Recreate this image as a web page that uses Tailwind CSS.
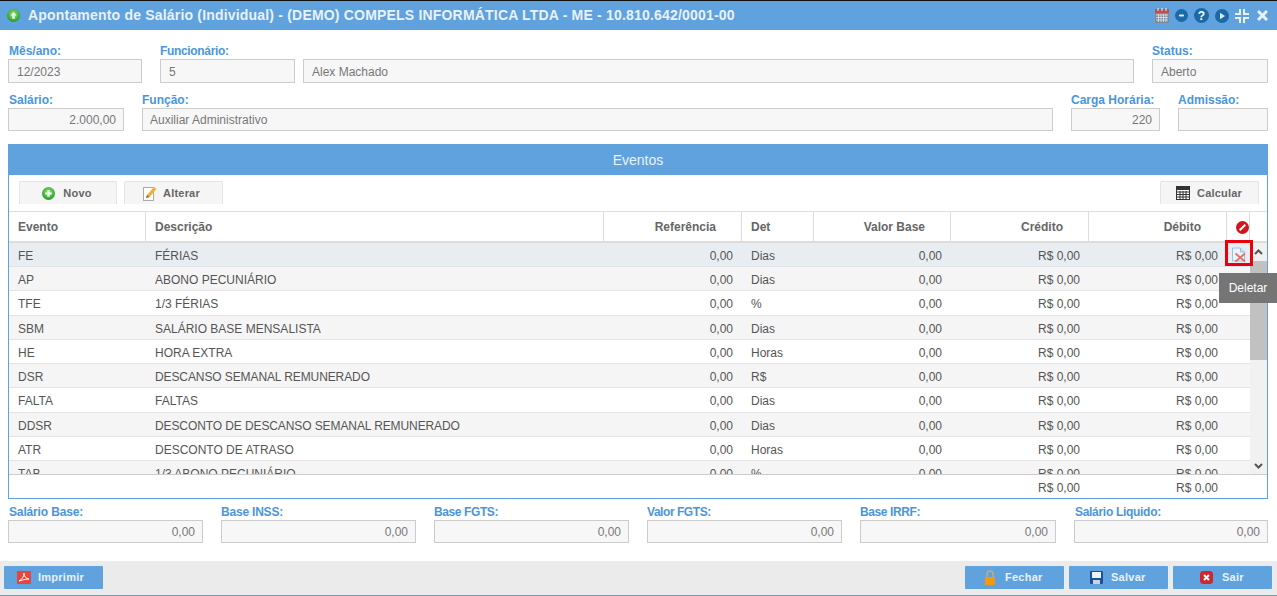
<!DOCTYPE html>
<html lang="pt"><head><meta charset="utf-8"><script src="https://cdn.jsdelivr.net/npm/@tailwindcss/browser@4"></script><title>Apontamento</title></head>
<body class="w-[1277px] h-[596px] overflow-hidden bg-white font-['Liberation_Sans',Arial,sans-serif] text-[12px] text-[#555]">
<div class="relative flex flex-col h-[596px] border-t border-[#111]">
<header class="flex items-center h-[29px] shrink-0 bg-[#5fa2dd] pl-[7px] pr-[9px]">
 <svg class="w-[13px] h-[13px] mr-[8px]" viewBox="0 0 14 14"><defs><radialGradient id="g1" cx=".5" cy=".4" r=".6"><stop offset="0" stop-color="#9be86a"/><stop offset="1" stop-color="#1c9a2c"/></radialGradient></defs><circle cx="7" cy="7" r="7" fill="url(#g1)"/><path d="M7 3.300 10.200 7H8.300v3.400H5.700V7H3.800z" fill="#f2fff0"/></svg>
 <span class="font-bold text-[14px] tracking-[0.19px] text-[#e9f1f9] whitespace-nowrap">Apontamento de Salário (Individual) - (DEMO) COMPELS INFORMÁTICA LTDA - ME - 10.810.642/0001-00</span>
 <div class="ml-auto flex items-center gap-[6px]">
  <svg class="w-[14px] h-[15px]" viewBox="0 0 14 15"><rect x="0" y="1" width="14" height="14" fill="#7f8b9b"/><rect x="0" y="1" width="14" height="4" fill="#c0504d"/><path d="M3 0v3M7 0v3M11 0v3" stroke="#eee"/><path d="M1 7h12M1 9.500h12M1 12h12M3.500 6v8M6 6v8M8.500 6v8M11 6v8" stroke="#e8edf2" stroke-width=".7"/></svg>
  <svg class="w-[13px] h-[13px]" viewBox="0 0 14 14"><circle cx="7" cy="7" r="7" fill="#1c69a8"/><rect x="4.200" y="5.800" width="5.600" height="2.400" rx="1.200" fill="#dfeaf5"/></svg>
  <svg class="w-[15px] h-[15px]" viewBox="0 0 15 15"><circle cx="7.500" cy="7.500" r="7.500" fill="#1c69a8"/><text x="7.500" y="12" text-anchor="middle" font-size="12" font-weight="700" font-family="Liberation Sans" fill="#fff">?</text></svg>
  <svg class="w-[14px] h-[14px]" viewBox="0 0 14 14"><circle cx="7" cy="7" r="7" fill="#1c69a8"/><path d="M5 3.800 10 7 5 10.200z" fill="#dfeaf5"/></svg>
  <svg class="w-[14px] h-[14px]" viewBox="0 0 14 14" fill="none" stroke="#e9f1f9" stroke-width="2"><path d="M5 0v5H0M9 0v5h5M5 14V9H0M9 14V9h5"/></svg>
  <svg class="w-[11px] h-[11px] ml-[2px]" viewBox="0 0 11 11" stroke="#e9f1f9" stroke-width="3"><path d="M1 1l9 9M10 1l-9 9"/></svg>
 </div>
</header>

<section class="pl-[8px] pr-[9px] pt-[14px] shrink-0 text-[#777]">
 <div class="flex gap-[18px] h-[40px]">
  <div class="w-[134px] flex flex-col"><span class="h-[15px] leading-[14px] font-bold text-[#4a96dc] pl-px">Mês/ano:</span><div class="h-[24px] border border-[#ccc] bg-[#f7f7f7] px-[8px] leading-[24px]">12/2023</div></div>
  <div class="flex-1 flex flex-col"><span class="h-[15px] leading-[14px] font-bold tracking-[-0.33px] text-[#4a96dc]">Funcionário:</span><div class="flex gap-[8px]"><div class="w-[135px] h-[24px] border border-[#ccc] bg-[#f7f7f7] px-[8px] leading-[24px]">5</div><div class="flex-1 h-[24px] border border-[#ccc] bg-[#f7f7f7] px-[8px] leading-[24px]">Alex Machado</div></div></div>
  <div class="w-[116px] flex flex-col"><span class="h-[15px] leading-[14px] font-bold text-[#4a96dc]">Status:</span><div class="h-[24px] border border-[#ccc] bg-[#f7f7f7] px-[8px] leading-[24px]">Aberto</div></div>
 </div>
 <div class="flex gap-[18px] h-[40px] mt-[9px]">
  <div class="w-[116px] flex flex-col"><span class="h-[15px] leading-[14px] font-bold text-[#4a96dc] pl-px">Salário:</span><div class="h-[23px] border border-[#ccc] bg-[#f7f7f7] px-[8px] leading-[22px] text-right pr-[7px]">2.000,00</div></div>
  <div class="flex-1 flex flex-col"><span class="h-[15px] leading-[14px] font-bold text-[#4a96dc]">Função:</span><div class="h-[23px] border border-[#ccc] bg-[#f7f7f7] px-[7px] leading-[22px]">Auxiliar Administrativo</div></div>
  <div class="w-[89px] flex flex-col"><span class="h-[15px] leading-[14px] font-bold text-[#4a96dc] whitespace-nowrap">Carga Horária:</span><div class="h-[23px] border border-[#ccc] bg-[#f7f7f7] leading-[22px] text-right pr-[7px]">220</div></div>
  <div class="w-[90px] flex flex-col"><span class="h-[15px] leading-[14px] font-bold text-[#4a96dc]">Admissão:</span><div class="h-[23px] border border-[#ccc] bg-[#f7f7f7]"></div></div>
 </div>
</section>

<section class="ml-[8px] mr-[9px] mt-[11px] h-[355px] shrink-0 border border-[#5fa2dd] flex flex-col">
 <div class="h-[30px] shrink-0 bg-[#5fa2dd] text-center text-[14px] leading-[30px] text-[#e9f1f9]">Eventos</div>
 <div class="h-[36px] shrink-0 flex items-start gap-[7px] pl-[10px] pr-[8px] pt-[6px]">
  <div class="h-[23px] w-[98px] flex items-center justify-center gap-[8px] pr-[2px] bg-[#f5f5f5] border border-b-0 border-[#e4e4e4] rounded-t-[2px] font-bold text-[11px] tracking-[0.2px] text-[#666]"><svg class="w-[13px] h-[13px]" viewBox="0 0 14 14"><defs><radialGradient id="g2" cx=".5" cy=".4" r=".6"><stop offset="0" stop-color="#9be86a"/><stop offset="1" stop-color="#1c9a2c"/></radialGradient></defs><circle cx="7" cy="7" r="7" fill="url(#g2)"/><path d="M5.800 3.500h2.400v2.300h2.300v2.400H8.200v2.300H5.800V8.200H3.500V5.800h2.300z" fill="#f2fff0"/></svg>Novo</div>
  <div class="h-[23px] w-[99px] flex items-center justify-center gap-[6px] pr-[4px] bg-[#f5f5f5] border border-b-0 border-[#e4e4e4] rounded-t-[2px] font-bold text-[11px] tracking-[0.2px] text-[#666]"><svg class="w-[14px] h-[15px]" viewBox="0 0 14 15"><rect x=".5" y="1.500" width="10" height="13" fill="#fff" stroke="#aaa"/><path d="M3 12l1-3 7-8 2.500 2-7 8z" fill="#f0b030"/><path d="M3 12l1-3 2.500 2z" fill="#8a6a30"/></svg>Alterar</div>
  <div class="ml-auto h-[23px] w-[99px] flex items-center justify-center gap-[7px] pr-[1px] bg-[#f5f5f5] border border-b-0 border-[#e4e4e4] rounded-t-[2px] font-bold text-[11px] tracking-[0.2px] text-[#666]"><svg class="w-[14px] h-[14px]" viewBox="0 0 14 14"><rect x=".5" y=".5" width="13" height="13" fill="#fff" stroke="#333"/><path d="M1 1h12v3H1z" fill="#333"/><path d="M1 6h12M1 8.500h12M1 11h12M4 5v8M7 5v8M10 5v8" stroke="#333"/></svg>Calcular</div>
 </div>
 <div class="h-[32px] shrink-0 grid grid-cols-[137px_458px_138px_72px_137px_138px_138px_23px_17px] border-t border-b-2 border-[#ddd] text-[12px] font-bold text-[#666] leading-[31px]">
  <div class="pl-[9px] border-r border-[#ddd]">Evento</div><div class="pl-[9px] border-r border-[#ddd]">Descrição</div><div class="pr-[25px] text-right border-r border-[#ddd]">Referência</div><div class="pl-[9px] border-r border-[#ddd]">Det</div><div class="pr-[25px] text-right border-r border-[#ddd]">Valor Base</div><div class="pr-[25px] text-right border-r border-[#ddd]">Crédito</div><div class="pr-[25px] text-right border-r border-[#ddd]">Débito</div>
  <div class="flex items-center justify-end border-r border-[#ddd]"><svg class="w-[13px] h-[13px]" viewBox="0 0 14 14"><circle cx="7" cy="7" r="7" fill="#d4161c"/><path d="M4 10l6-6" stroke="#fff" stroke-width="2.200"/></svg></div><div></div>
 </div>
 <div class="h-[231px] shrink-0 overflow-hidden flex relative">
  <div class="w-[1241px] shrink-0 leading-[24.220px]">
   <div class="h-[24.220px] pt-px grid grid-cols-[137px_458px_138px_72px_137px_138px_138px_23px] bg-[#e8edf2] border-b border-[#e0e4e8]"><div class="pl-[9px]">FE</div><div class="pl-[9px]">FÉRIAS</div><div class="pr-[9px] text-right">0,00</div><div class="pl-[9px]">Dias</div><div class="pr-[9px] text-right">0,00</div><div class="pr-[9px] text-right">R$ 0,00</div><div class="pr-[9px] text-right">R$ 0,00</div><div class="flex items-start justify-center pt-[3px]"><svg class="w-[16px] h-[16px]" viewBox="0 0 16 16"><path d="M1.500 1h8l4 4v9h-12z" fill="#eaf3fb" stroke="#9cc2e3"/><path d="M9.500 1v4h4" fill="#cfe2f3" stroke="#9cc2e3"/><path d="M4.500 6.500l9.500 8M14 6.500l-9.500 8" stroke="#e2706a" stroke-width="1.800"/></svg></div></div>
   <div class="h-[24.220px] pt-px grid grid-cols-[137px_458px_138px_72px_137px_138px_138px_23px] bg-[#f5f5f5] border-b border-[#e4e4e4]"><div class="pl-[9px]">AP</div><div class="pl-[9px]">ABONO PECUNIÁRIO</div><div class="pr-[9px] text-right">0,00</div><div class="pl-[9px]">Dias</div><div class="pr-[9px] text-right">0,00</div><div class="pr-[9px] text-right">R$ 0,00</div><div class="pr-[9px] text-right">R$ 0,00</div><div></div></div>
   <div class="h-[24.220px] pt-px grid grid-cols-[137px_458px_138px_72px_137px_138px_138px_23px] bg-white border-b border-[#e4e4e4]"><div class="pl-[9px]">TFE</div><div class="pl-[9px]">1/3 FÉRIAS</div><div class="pr-[9px] text-right">0,00</div><div class="pl-[9px]">%</div><div class="pr-[9px] text-right">0,00</div><div class="pr-[9px] text-right">R$ 0,00</div><div class="pr-[9px] text-right">R$ 0,00</div><div></div></div>
   <div class="h-[24.220px] pt-px grid grid-cols-[137px_458px_138px_72px_137px_138px_138px_23px] bg-[#f5f5f5] border-b border-[#e4e4e4]"><div class="pl-[9px]">SBM</div><div class="pl-[9px]">SALÁRIO BASE MENSALISTA</div><div class="pr-[9px] text-right">0,00</div><div class="pl-[9px]">Dias</div><div class="pr-[9px] text-right">0,00</div><div class="pr-[9px] text-right">R$ 0,00</div><div class="pr-[9px] text-right">R$ 0,00</div><div></div></div>
   <div class="h-[24.220px] pt-px grid grid-cols-[137px_458px_138px_72px_137px_138px_138px_23px] bg-white border-b border-[#e4e4e4]"><div class="pl-[9px]">HE</div><div class="pl-[9px]">HORA EXTRA</div><div class="pr-[9px] text-right">0,00</div><div class="pl-[9px]">Horas</div><div class="pr-[9px] text-right">0,00</div><div class="pr-[9px] text-right">R$ 0,00</div><div class="pr-[9px] text-right">R$ 0,00</div><div></div></div>
   <div class="h-[24.220px] pt-px grid grid-cols-[137px_458px_138px_72px_137px_138px_138px_23px] bg-[#f5f5f5] border-b border-[#e4e4e4]"><div class="pl-[9px]">DSR</div><div class="pl-[9px] tracking-[-0.1px]">DESCANSO SEMANAL REMUNERADO</div><div class="pr-[9px] text-right">0,00</div><div class="pl-[9px]">R$</div><div class="pr-[9px] text-right">0,00</div><div class="pr-[9px] text-right">R$ 0,00</div><div class="pr-[9px] text-right">R$ 0,00</div><div></div></div>
   <div class="h-[24.220px] pt-px grid grid-cols-[137px_458px_138px_72px_137px_138px_138px_23px] bg-white border-b border-[#e4e4e4]"><div class="pl-[9px]">FALTA</div><div class="pl-[9px]">FALTAS</div><div class="pr-[9px] text-right">0,00</div><div class="pl-[9px]">Dias</div><div class="pr-[9px] text-right">0,00</div><div class="pr-[9px] text-right">R$ 0,00</div><div class="pr-[9px] text-right">R$ 0,00</div><div></div></div>
   <div class="h-[24.220px] pt-px grid grid-cols-[137px_458px_138px_72px_137px_138px_138px_23px] bg-[#f5f5f5] border-b border-[#e4e4e4]"><div class="pl-[9px]">DDSR</div><div class="pl-[9px] tracking-[-0.1px]">DESCONTO DE DESCANSO SEMANAL REMUNERADO</div><div class="pr-[9px] text-right">0,00</div><div class="pl-[9px]">Dias</div><div class="pr-[9px] text-right">0,00</div><div class="pr-[9px] text-right">R$ 0,00</div><div class="pr-[9px] text-right">R$ 0,00</div><div></div></div>
   <div class="h-[24.220px] pt-px grid grid-cols-[137px_458px_138px_72px_137px_138px_138px_23px] bg-white border-b border-[#e4e4e4]"><div class="pl-[9px]">ATR</div><div class="pl-[9px]">DESCONTO DE ATRASO</div><div class="pr-[9px] text-right">0,00</div><div class="pl-[9px]">Horas</div><div class="pr-[9px] text-right">0,00</div><div class="pr-[9px] text-right">R$ 0,00</div><div class="pr-[9px] text-right">R$ 0,00</div><div></div></div>
   <div class="h-[24.220px] pt-px grid grid-cols-[137px_458px_138px_72px_137px_138px_138px_23px] bg-[#f5f5f5]"><div class="pl-[9px]">TAB</div><div class="pl-[9px]">1/3 ABONO PECUNIÁRIO</div><div class="pr-[9px] text-right">0,00</div><div class="pl-[9px]">%</div><div class="pr-[9px] text-right">0,00</div><div class="pr-[9px] text-right">R$ 0,00</div><div class="pr-[9px] text-right">R$ 0,00</div><div></div></div>
  </div>
  <div class="w-[17px] shrink-0 bg-[#f1f1f1] flex flex-col">
   <div class="h-[18px] flex items-center justify-center"><svg class="w-[9px] h-[6px]" viewBox="0 0 9 6" fill="none" stroke="#555" stroke-width="2"><path d="M1 5l3.500-3.500L8 5"/></svg></div>
   <div class="h-[99px] bg-[#c1c1c1]"></div>
   <div class="mt-auto h-[17px] flex items-center justify-center"><svg class="w-[9px] h-[6px]" viewBox="0 0 9 6" fill="none" stroke="#555" stroke-width="2"><path d="M1 1l3.500 3.500L8 1"/></svg></div>
  </div>
 </div>
 <div class="flex-1 border-t border-[#ccc] grid grid-cols-[137px_458px_138px_72px_137px_138px_138px] leading-[26px]">
  <div></div><div></div><div></div><div></div><div></div><div class="pr-[9px] text-right">R$ 0,00</div><div class="pr-[9px] text-right">R$ 0,00</div>
 </div>
</section>

<section class="px-[8px] pt-[6px] h-[62px] shrink-0 grid grid-cols-[195px_195px_195px_195px_196px_194px] gap-x-[18px] text-[#777]">
 <div><div class="h-[15px] leading-[14px] font-bold tracking-[-0.15px] text-[#4a96dc] pl-px">Salário Base:</div><div class="h-[23px] border border-[#ccc] bg-[#f7f7f7] text-right pr-[7px] leading-[23px]">0,00</div></div>
 <div><div class="h-[15px] leading-[14px] font-bold tracking-[-0.2px] text-[#4a96dc]">Base INSS:</div><div class="h-[23px] border border-[#ccc] bg-[#f7f7f7] text-right pr-[7px] leading-[23px]">0,00</div></div>
 <div><div class="h-[15px] leading-[14px] font-bold tracking-[-0.4px] text-[#4a96dc]">Base FGTS:</div><div class="h-[23px] border border-[#ccc] bg-[#f7f7f7] text-right pr-[7px] leading-[23px]">0,00</div></div>
 <div><div class="h-[15px] leading-[14px] font-bold tracking-[-0.45px] text-[#4a96dc]">Valor FGTS:</div><div class="h-[23px] border border-[#ccc] bg-[#f7f7f7] text-right pr-[7px] leading-[23px]">0,00</div></div>
 <div><div class="h-[15px] leading-[14px] font-bold tracking-[-0.4px] text-[#4a96dc]">Base IRRF:</div><div class="h-[23px] border border-[#ccc] bg-[#f7f7f7] text-right pr-[7px] leading-[23px]">0,00</div></div>
 <div><div class="h-[15px] leading-[14px] font-bold tracking-[-0.3px] text-[#4a96dc] pl-px">Salário Liquido:</div><div class="h-[23px] border border-[#ccc] bg-[#f7f7f7] text-right pr-[7px] leading-[23px]">0,00</div></div>
</section>

<footer class="h-[35px] shrink-0 bg-[#ebebeb] border-b border-[#5fa2dd] flex items-center gap-[5px] pl-[4px] pr-[5px] pb-[1px] font-bold text-[11px] tracking-[0.25px] text-[#e9f1f9]">
 <div class="h-[23px] w-[99px] flex items-center pl-[13px] gap-[7px] bg-[#5fa2dd] rounded-[1px]"><svg class="w-[14px] h-[13px]" viewBox="0 0 14 13"><rect width="14" height="13" fill="#e8463c"/><path d="M2 10c3-1 5-5 5-8 0 3 2 6 5 6-3 0-7 1-10 2z" fill="none" stroke="#fff"/></svg>Imprimir</div>
 <div class="ml-auto h-[23px] w-[99px] flex items-center pl-[19px] gap-[9px] bg-[#5fa2dd] rounded-[1px]"><svg class="w-[12px] h-[15px]" viewBox="0 0 12 15"><path d="M3 7V4a3 3 0 0 1 6 0v3" fill="none" stroke="#c4b070" stroke-width="1.500"/><rect x="1" y="7" width="10" height="8" fill="#f09a14"/></svg>Fechar</div>
 <div class="h-[23px] w-[99px] flex items-center pl-[21px] gap-[8px] bg-[#5fa2dd] rounded-[1px]"><svg class="w-[13px] h-[13px]" viewBox="0 0 13 13"><rect width="13" height="13" rx="1" fill="#1d4f9c"/><rect x="2" y="1" width="9" height="6" fill="#eaf2fb"/><rect x="3" y="9" width="7" height="4" fill="#c9d3dd"/></svg>Salvar</div>
 <div class="h-[23px] w-[99px] flex items-center pl-[27px] gap-[9px] bg-[#5fa2dd] rounded-[1px]"><svg class="w-[13px] h-[13px]" viewBox="0 0 13 13"><rect width="13" height="13" rx="3.500" fill="#d3262c"/><path d="M4 4l5 5M9 4l-5 5" stroke="#fff" stroke-width="2"/></svg>Sair</div>
</footer>

<div class="absolute left-[1225px] top-[239px] w-[28px] h-[26px] border-[3px] border-[#e8000d]"></div>
<div class="absolute left-[1219px] top-[272px] w-[58px] h-[30px] bg-[#757575] text-white text-center leading-[30px]">Deletar</div>
</div>
</body></html>
